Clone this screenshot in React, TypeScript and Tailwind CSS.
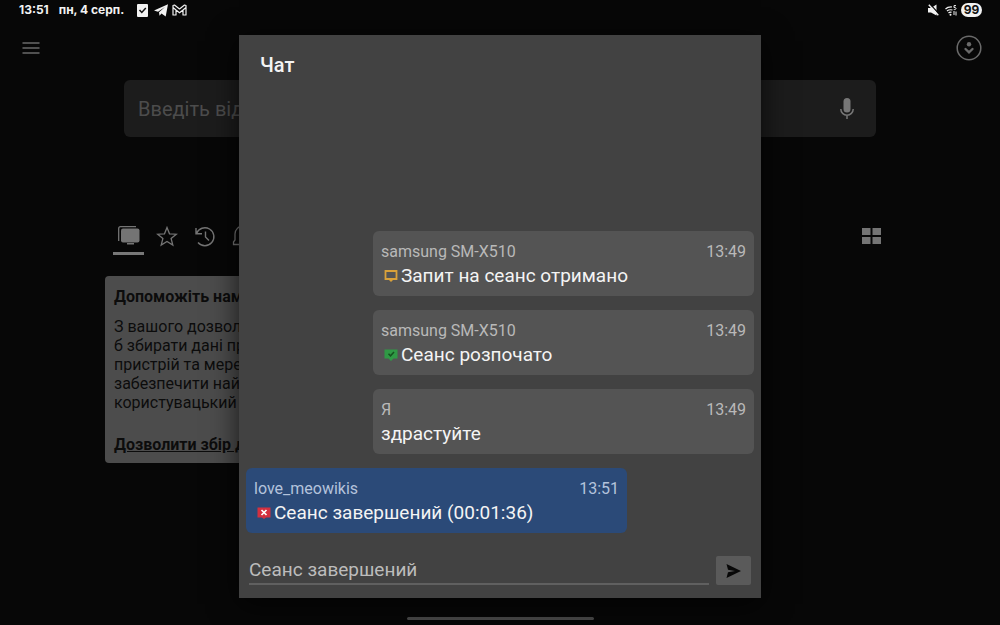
import type { ReactNode } from 'react'

interface Message {
  author: string
  time: string
  text: string
  icon?: ReactNode
  own: boolean
}

function RequestIcon() {
  return (
    <svg width="14" height="12" viewBox="0 0 14 12" aria-hidden="true">
      <path d="M1.5 1h11v8h-11z" fill="none" stroke="#d9a13a" strokeWidth="1.8" />
      <path d="M4.5 9.5h5L7 12z" fill="#d9a13a" />
    </svg>
  )
}

function StartedIcon() {
  return (
    <svg width="14" height="12" viewBox="0 0 14 12" aria-hidden="true">
      <path d="M.5.5h13v9H9.500L7 12 4.500 9.500H.5z" fill="#2f9a45" />
      <path d="M4.500 4.800l2 2 3.500-3.800" fill="none" stroke="#14521f" strokeWidth="1.500" />
    </svg>
  )
}

function EndedIcon() {
  return (
    <svg width="14" height="12" viewBox="0 0 14 12" aria-hidden="true">
      <path d="M.5.5h13v10H9L7 12l-2-1.500H.5z" fill="#d3303f" />
      <path d="M4.500 3l5 5m0-5l-5 5" stroke="#fff" strokeWidth="1.700" />
    </svg>
  )
}

const messages: Message[] = [
  { author: 'samsung SM-X510', time: '13:49', text: 'Запит на сеанс отримано', icon: <RequestIcon />, own: true },
  { author: 'samsung SM-X510', time: '13:49', text: 'Сеанс розпочато', icon: <StartedIcon />, own: true },
  { author: 'Я', time: '13:49', text: 'здрастуйте', own: true },
  { author: 'love_meowikis', time: '13:51', text: 'Сеанс завершений (00:01:36)', icon: <EndedIcon />, own: false },
]

function StatusBar() {
  return (
    <div className="flex h-5 items-center justify-between pr-[18px] pl-[19px] font-['Inter',sans-serif] text-xs font-bold text-[#f2f2f2]">
      <div className="flex items-center">
        <span>13:51</span>
        <span className="ml-2.5">пн, 4 серп.</span>
        <svg className="ml-[13px]" width="11" height="13" viewBox="0 0 11 13" aria-hidden="true">
          <rect width="11" height="13" rx="1" fill="#f2f2f2" />
          <path d="M2.500 6l2.300 2.500L8.800 4" fill="none" stroke="#111" strokeWidth="1.500" />
        </svg>
        <svg className="ml-1.5" width="14" height="13" viewBox="0 0 14 13" aria-hidden="true">
          <path d="M0 6.500L14 .3 11.700 12.500 7.500 9.600 5.500 11.800 5 8.300 11 3 4 7.700z" fill="#f2f2f2" />
        </svg>
        <svg className="ml-1" width="15" height="12" viewBox="0 0 15 12" aria-hidden="true">
          <path
            d="M1 11V1.500L2.500 1 7.500 5 12.500 1l1.500.5V11h-3V6L7.500 8.800 4 6v5zM1 3.500L4 6m10-2.500L11 6"
            fill="none"
            stroke="#f2f2f2"
            strokeWidth="1.200"
            strokeLinejoin="round"
          />
        </svg>
      </div>
      <div className="flex items-center">
        <svg width="11" height="12" viewBox="0 0 11 12" aria-hidden="true">
          <path d="M0 4h3L8.500.5v11L3 8.500H0z" fill="#f2f2f2" />
          <path d="M2 0l9 10" stroke="#070707" strokeWidth="1.200" />
          <path d="M.8.8l9.500 10.500" stroke="#f2f2f2" strokeWidth="1.400" />
        </svg>
        <svg className="ml-1.5" width="12" height="11" viewBox="0 0 12 11" aria-hidden="true">
          <path d="M.5 4C2 2.500 4 1.800 7 2M2 6c1.400-1.200 3-1.600 5.500-1M3.500 8c1-.9 2-1 3-.6" fill="none" stroke="#f2f2f2" strokeWidth="1.200" />
          <path d="M11 .6H9v2c1.600-.3 2 .3 2 1S10 4.800 8.800 4.500M9 6v4M11 6.500v4" fill="none" stroke="#f2f2f2" />
          <circle cx="5.500" cy="9.800" r="1" fill="#f2f2f2" />
        </svg>
        <span className="ml-1 flex h-3.5 w-[21px] items-center justify-center rounded-full bg-[#f2f2f2] text-xs text-[#111]">
          99
        </span>
      </div>
    </div>
  )
}

function Tabs() {
  return (
    <div className="mt-[85px] flex items-start justify-between pr-[119px] pl-[113px] text-[#747474]">
      <div className="flex items-start gap-2">
        <button className="flex w-[31px] flex-col items-center gap-1.5" aria-label="Пристрої">
          <svg className="mt-1" width="22" height="20" viewBox="0 0 22 20" aria-hidden="true">
            <path d="M.7 15V2.500Q.7.700 2.500.7H18" fill="none" stroke="currentColor" strokeWidth="1.300" />
            <rect x="3" y="2.500" width="18.500" height="14" rx="2" fill="currentColor" />
            <path d="M9 17h7v1.500H9z" fill="currentColor" />
          </svg>
          <span className="h-[3px] w-full bg-[#777]" />
        </button>
        <button className="mt-1 flex h-5 w-[30px] justify-center" aria-label="Обране">
          <svg width="22" height="21" viewBox="0 0 22 21" aria-hidden="true">
            <path
              d="M11 1.500l2.500 6.300 6.800.4-5.200 4.300 1.700 6.600-5.800-3.700-5.800 3.700 1.700-6.600L1.700 8.200l6.800-.4z"
              fill="none"
              stroke="currentColor"
              strokeWidth="1.300"
            />
          </svg>
        </button>
        <button className="mt-1 flex h-5 w-[30px] justify-center" aria-label="Історія">
          <svg width="22" height="21" viewBox="0 0 22 21" aria-hidden="true">
            <path d="M2.500 7.500A9 9 0 1 1 4 16.500M2 2v5.800h6M11.500 5.500v5.500l3.500 3.500" fill="none" stroke="currentColor" strokeWidth="1.400" />
          </svg>
        </button>
        <button className="mt-1 flex h-5 w-[30px] justify-center" aria-label="Сповіщення">
          <svg width="22" height="21" viewBox="0 0 22 21" aria-hidden="true">
            <path d="M1.500 18.500V16L3 14V8a8 8 0 0 1 16 0v6l1.500 2v2.500z" fill="none" stroke="currentColor" strokeWidth="1.300" />
          </svg>
        </button>
      </div>
      <button className="mt-1.5" aria-label="Сітка">
        <svg width="19" height="16" viewBox="0 0 19 16" aria-hidden="true">
          <path d="M0 0h8.500v7H0zM10.500 0H19v7h-8.500zM0 9h8.500v7H0zM10.500 9H19v7h-8.500z" fill="currentColor" />
        </svg>
      </button>
    </div>
  )
}

function ConsentCard() {
  return (
    <section className="mt-[21px] ml-[105px] w-[270px] rounded-sm bg-[#4c4c4c] px-[9px] pt-[11px] pb-2 text-base whitespace-nowrap text-[#0c0c0c]">
      <h2 className="leading-5 font-bold">Допоможіть нам</h2>
      <p className="mt-[10px] leading-[19px]">
        З вашого дозволу
        <br />
        б збирати дані про
        <br />
        пристрій та мережу
        <br />
        забезпечити найкращий
        <br />
        користувацький
      </p>
      <a href="#consent" className="mt-[23px] block leading-5 font-bold underline">
        Дозволити збір даних
      </a>
    </section>
  )
}

function Bubble({ message }: { message: Message }) {
  const color = message.own ? 'self-end bg-[#545454]' : 'self-start bg-[#2b4a78]'
  const meta = message.own ? 'text-[#b9b9b9]' : 'text-[#b4c3dc]'

  return (
    <li className={`w-3/4 rounded-md px-2 pt-[9px] pb-2 ${color}`}>
      <div className={`flex justify-between text-base leading-6 ${meta}`}>
        <span>{message.author}</span>
        <time>{message.time}</time>
      </div>
      <p className="flex items-center text-[19px] leading-6 text-[#f4f4f4]">
        {message.icon && <span className="mr-[3px] ml-[3px]">{message.icon}</span>}
        {message.text}
      </p>
    </li>
  )
}

function ChatDialog() {
  return (
    <div className="absolute inset-0 flex justify-center pt-[35px] pb-[27px]">
      <div
        role="dialog"
        aria-labelledby="chat-title"
        className="flex w-[522px] flex-col bg-[#424242] px-[7px] shadow-[0_6px_28px_rgba(0,0,0,0.7)]"
      >
        <h1 id="chat-title" className="px-3.5 pt-4 text-xl leading-7 font-medium text-[#f4f4f4]">
          Чат
        </h1>
        <ul className="flex flex-1 flex-col justify-end gap-3.5">
          {messages.map((message, i) => (
            <Bubble key={i} message={message} />
          ))}
        </ul>
        <form className="mt-[22px] mb-[13px] flex items-end gap-[7px] pr-[3px] pl-[3px]" onSubmit={(e) => e.preventDefault()}>
          <input
            type="text"
            aria-label="Повідомлення"
            placeholder="Сеанс завершений"
            className="h-[30px] min-w-0 flex-1 border-b-2 border-[#606060] text-[19px] leading-7 outline-none placeholder:text-[#bcbcbc]"
          />
          <button className="flex h-[29px] w-[35px] items-center justify-center rounded-xs bg-[#5a5a5a]" aria-label="Надіслати">
            <svg width="15" height="14" viewBox="0 0 15 14" aria-hidden="true">
              <path d="M.5 0L15 7 .5 14 2 8.200 9 7 2 5.800z" fill="#080808" />
            </svg>
          </button>
        </form>
      </div>
    </div>
  )
}

export default function App() {
  return (
    <div className="relative flex min-h-screen flex-col overflow-hidden bg-[#070707] font-['Roboto',sans-serif]">
      <StatusBar />
      <header className="flex h-14 items-center justify-between pr-[18px] pl-[22px] text-[#6a6a6a]">
        <button aria-label="Меню">
          <svg width="18" height="14" viewBox="0 0 18 14" aria-hidden="true">
            <path d="M.5 2h17M.5 7h17M.5 12h17" stroke="currentColor" strokeWidth="1.500" />
          </svg>
        </button>
        <button aria-label="Обліковий запис">
          <svg width="26" height="26" viewBox="0 0 26 26" aria-hidden="true">
            <circle cx="13" cy="13" r="11.800" fill="none" stroke="currentColor" strokeWidth="1.500" />
            <circle cx="13" cy="9.300" r="2.200" fill="currentColor" />
            <path d="M9.500 14l3.500 3.300 3.500-3.300" fill="none" stroke="currentColor" strokeWidth="2.400" strokeLinecap="round" />
          </svg>
        </button>
      </header>
      <div className="mx-[124px] mt-1 flex h-[57px] items-center justify-between rounded-md bg-[#1c1c1c] pr-[22px] pl-3.5">
        <input
          type="text"
          aria-label="Віддалена адреса"
          placeholder="Введіть віддалену адресу"
          className="min-w-0 flex-1 text-xl outline-none placeholder:text-[#4c4c4c]"
        />
        <button aria-label="Голосовий пошук">
          <svg width="14" height="21" viewBox="0 0 14 21" aria-hidden="true">
            <rect x="3.500" y="0" width="7" height="14.500" rx="3.500" fill="#777" />
            <path d="M.8 11a6.200 6.200 0 0 0 12.400 0M7 17.200V21" fill="none" stroke="#777" strokeWidth="1.500" />
          </svg>
        </button>
      </div>
      <Tabs />
      <ConsentCard />
      <div className="mx-auto mt-auto mb-[5px] h-[3px] w-[187px] rounded-full bg-[#4a4a4a]" />
      <ChatDialog />
    </div>
  )
}
